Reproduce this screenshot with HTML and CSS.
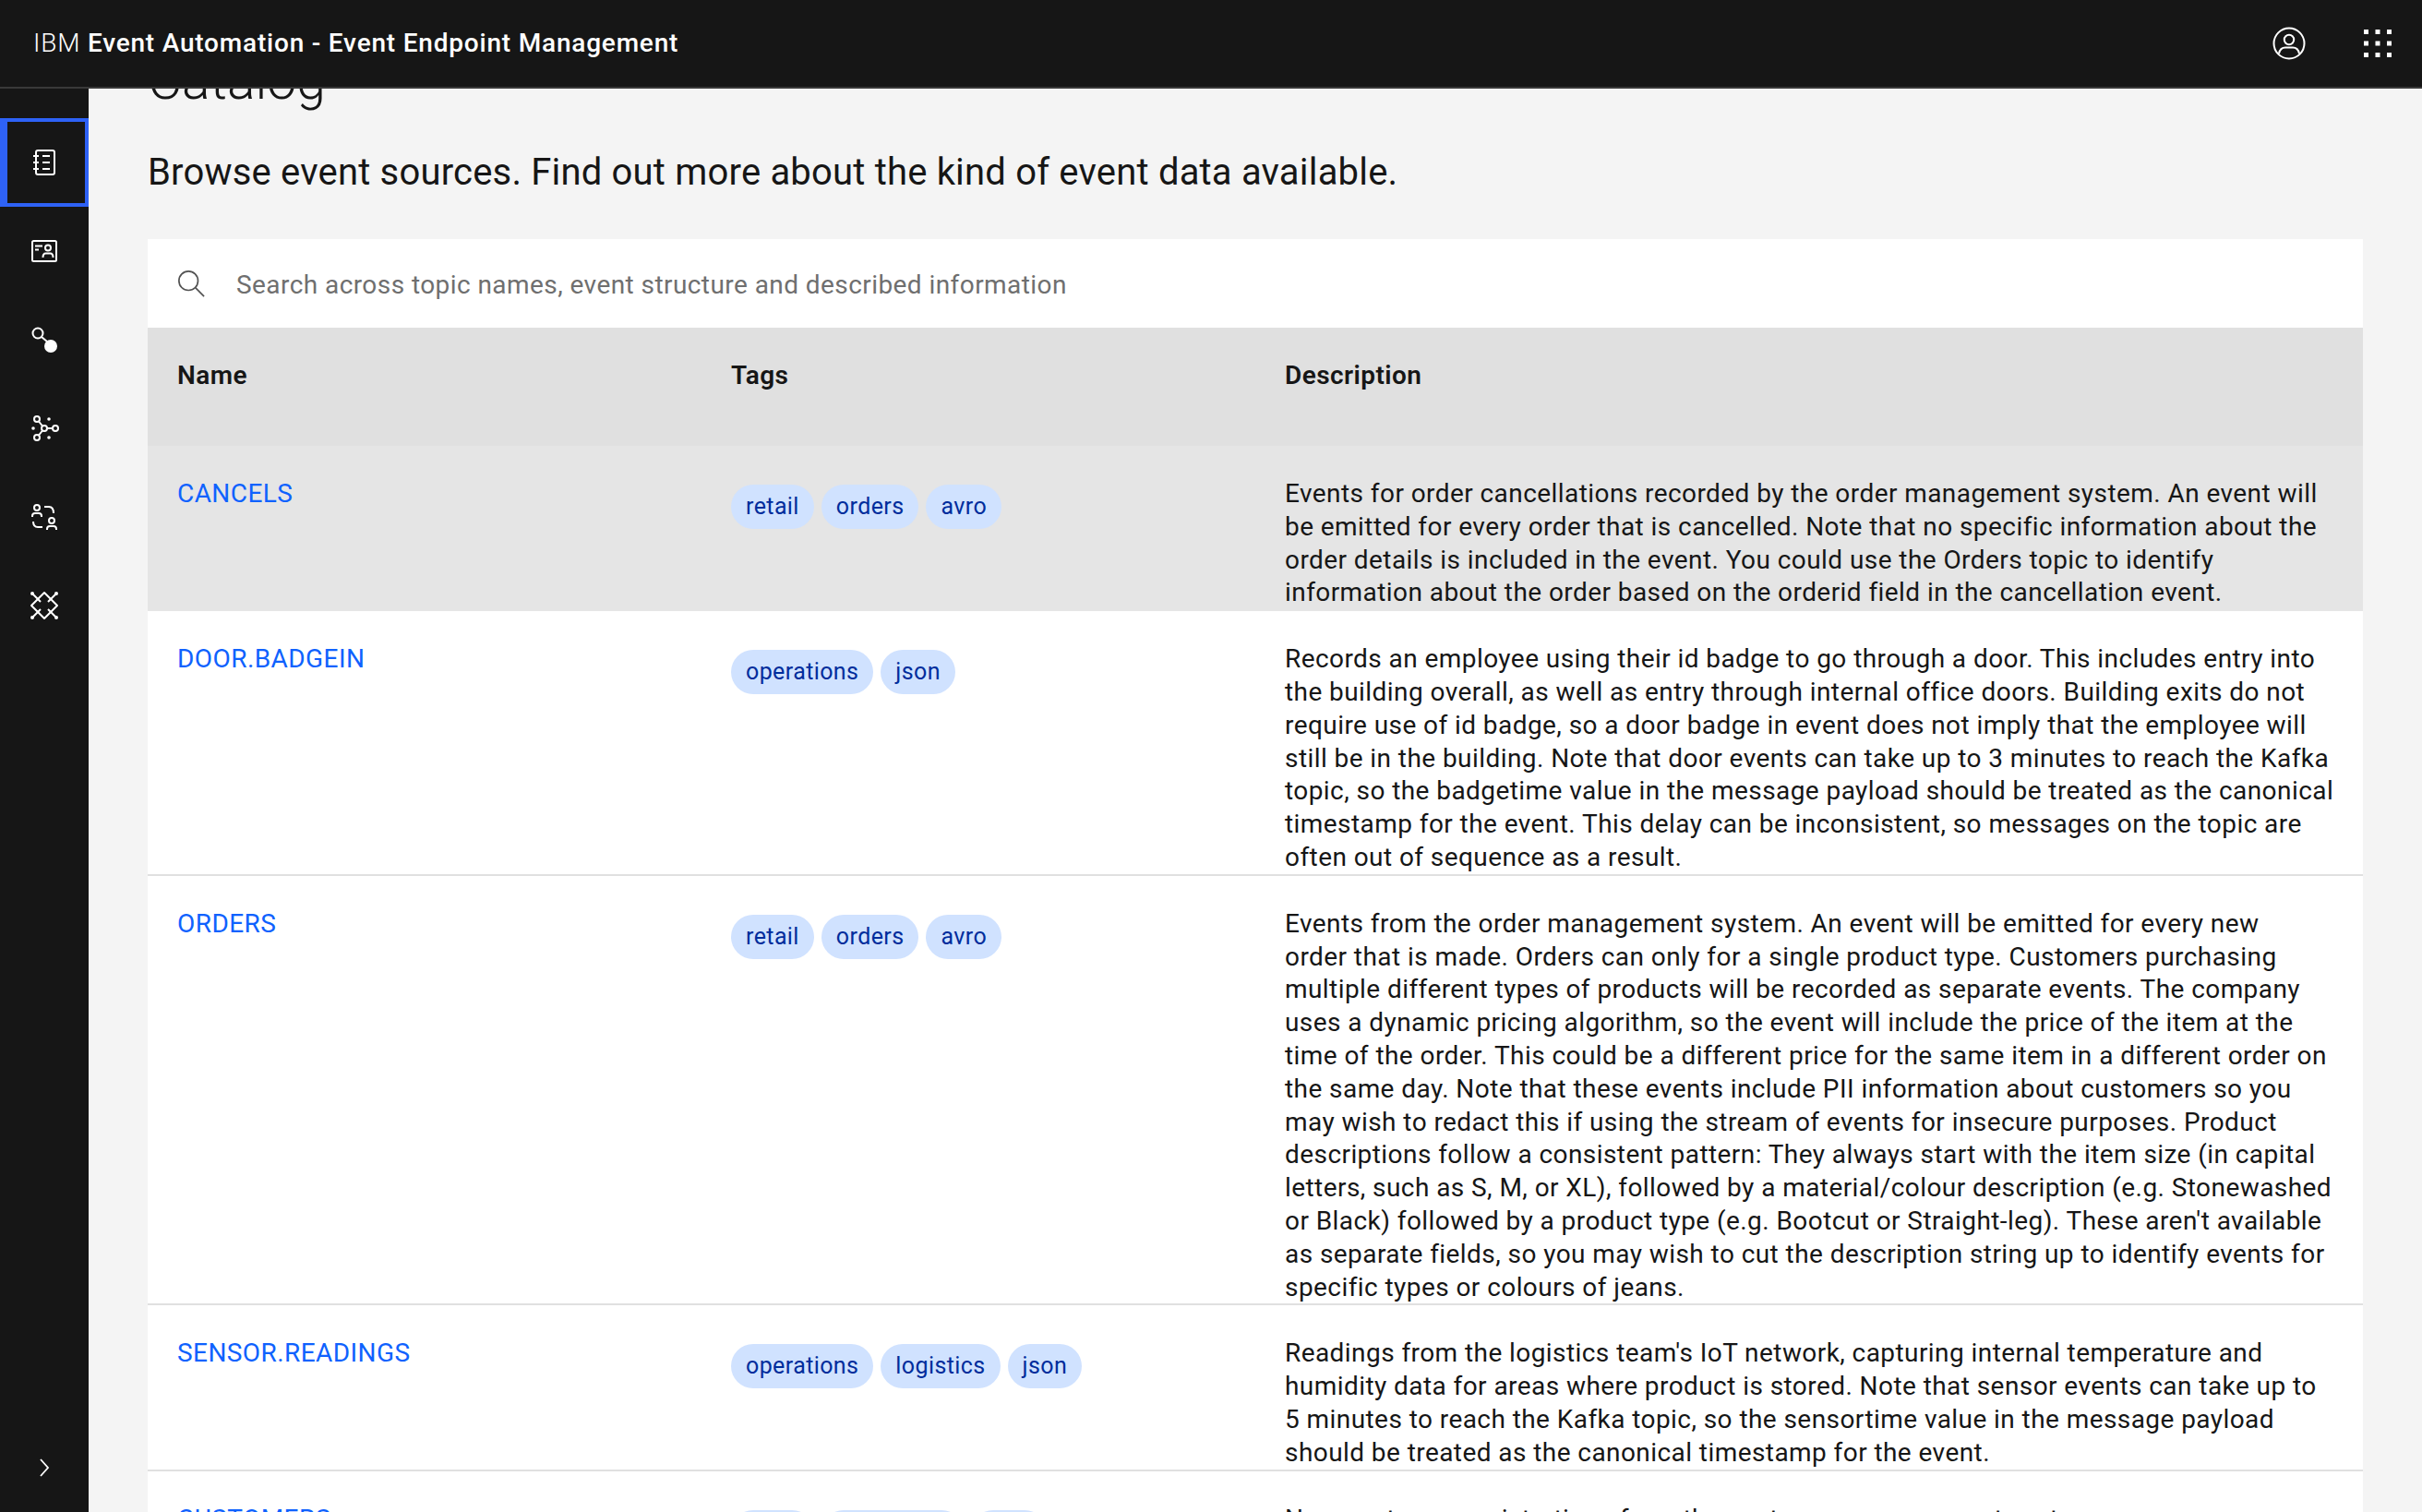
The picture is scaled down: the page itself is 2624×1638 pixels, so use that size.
FILE: index.html
```html
<!DOCTYPE html>
<html lang="en">
<head>
    <meta name="viewport" content="width=device-width, initial-scale=1.0">
    <meta charset="UTF-8">
    <title>Catalog - IBM Event Automation</title>
    <link rel="stylesheet" href="styles.css">
</head>
<body>
    <header class="top-bar">
        <div class="product-name">IBM <strong>Event Automation - Event Endpoint Management</strong></div>
        <div class="top-actions">
            <svg class="top-icon" viewBox="0 0 36 36" fill="none" stroke="#fff" stroke-width="2">
                <circle cx="18" cy="18" r="16.500"/>
                <circle cx="18" cy="14" r="5.200"/>
                <path d="M7 29c1-5 4-6.500 7-6.500h8c3 0 6 1.500 7 6.500"/>
            </svg>
            <svg class="grid-icon" viewBox="0 0 32 32" fill="#fff">
                <rect x="1" y="1" width="5" height="5"/><rect x="13.500" y="1" width="5" height="5"/><rect x="26" y="1" width="5" height="5"/>
                <rect x="1" y="13.500" width="5" height="5"/><rect x="13.500" y="13.500" width="5" height="5"/><rect x="26" y="13.500" width="5" height="5"/>
                <rect x="1" y="26" width="5" height="5"/><rect x="13.500" y="26" width="5" height="5"/><rect x="26" y="26" width="5" height="5"/>
            </svg>
        </div>
    </header>
    <div class="layout">
        <nav class="side-nav">
            <a class="nav-item active">
                <svg class="nav-icon" viewBox="0 0 32 32" fill="none" stroke="#fff" stroke-width="2">
                    <rect x="7" y="3" width="20" height="26" rx="2"/>
                    <path d="M4 9h6M4 16h6M4 23h6M14 9h8M14 16h8M14 23h8"/>
                </svg>
            </a>
            <a class="nav-item">
                <svg class="nav-icon" viewBox="0 0 32 32" fill="none" stroke="#fff" stroke-width="2">
                    <rect x="3" y="5" width="26" height="22" rx="1.500"/>
                    <path d="M6 10.500h8M6 14.500h4"/>
                    <circle cx="20" cy="12.500" r="3"/>
                    <path d="M14.500 23c0-3 1-4.500 3-4.500h5c2 0 3 1.500 3 4.500"/>
                </svg>
            </a>
            <a class="nav-item">
                <svg class="nav-icon" viewBox="0 0 32 32" fill="none" stroke="#fff" stroke-width="2">
                    <circle cx="9" cy="9" r="5.500"/>
                    <path d="M13 13l6 5"/>
                    <circle cx="23" cy="23" r="6" fill="#fff"/>
                </svg>
            </a>
            <a class="nav-item">
                <svg class="nav-icon" viewBox="0 0 32 32" fill="none" stroke="#fff" stroke-width="2">
                    <circle cx="16" cy="16" r="3"/>
                    <circle cx="8" cy="6" r="3"/>
                    <circle cx="8" cy="26" r="3"/>
                    <circle cx="28" cy="16" r="3"/>
                    <path d="M10 8.500l4 5M10 23.500l4-5M19 16h6"/>
                    <g fill="#fff" stroke="none">
                        <circle cx="21" cy="6" r="1.800"/><circle cx="21" cy="26" r="1.800"/><circle cx="4" cy="16" r="1.800"/>
                    </g>
                </svg>
            </a>
            <a class="nav-item">
                <svg class="nav-icon" viewBox="0 0 32 32" fill="none" stroke="#fff" stroke-width="2">
                    <circle cx="8" cy="6" r="3"/>
                    <path d="M3 16v-1c0-2 1-3 3-3h4c2 0 3 1 3 3v1"/>
                    <circle cx="24" cy="20" r="3"/>
                    <path d="M19 30v-1c0-2 1-3 3-3h4c2 0 3 1 3 3v1"/>
                    <path d="M16 5h5c3 0 5 2 5 7M14 27h-5c-3 0-5-2-5-6"/>
                </svg>
            </a>
            <a class="nav-item">
                <svg class="nav-icon" viewBox="0 0 32 32" fill="none" stroke="#fff" stroke-width="2" stroke-linejoin="round">
                    <path d="M16 2l14 14-14 14L2 16z"/>
                    <path d="M3 3l9 9M29 3l-9 9M3 29l9-9M29 29l-9-9"/>
                    <g fill="#fff" stroke="none">
                        <circle cx="3" cy="3" r="2"/><circle cx="29" cy="3" r="2"/><circle cx="3" cy="29" r="2"/><circle cx="29" cy="29" r="2"/>
                    </g>
                </svg>
            </a>
            <a class="nav-item nav-toggle">
                <svg class="chevron" viewBox="0 0 12 20" fill="none" stroke="#fff" stroke-width="1.800">
                    <path d="M2 1l8 9-8 9"/>
                </svg>
            </a>
        </nav>
        <main class="content">
            <div class="scrolled">
                <h1>Catalog</h1>
                <p class="intro">Browse event sources. Find out more about the kind of event data available.</p>

                <div class="search-row">
                    <svg class="search-icon" viewBox="0 0 32 32" fill="none" stroke="#525252" stroke-width="1.800">
                        <circle cx="13" cy="13" r="11"/>
                        <path d="M21 21l10 10"/>
                    </svg>
                    <span class="search-text">Search across topic names, event structure and described information</span>
                </div>

                <table class="catalog">
                    <colgroup>
                        <col class="col-name">
                        <col class="col-tags">
                        <col>
                    </colgroup>
                    <thead>
                        <tr>
                            <th>Name</th>
                            <th>Tags</th>
                            <th>Description</th>
                        </tr>
                    </thead>
                    <tbody>
                        <tr class="hovered">
                            <td><a class="topic">CANCELS</a></td>
                            <td>
                                <div class="tags"><span class="tag">retail</span><span class="tag">orders</span><span class="tag">avro</span></div>
                            </td>
                            <td class="desc">Events for order cancellations recorded by the order management system. An event will<br>be emitted for every order that is cancelled. Note that no specific information about the<br>order details is included in the event. You could use the Orders topic to identify<br>information about the order based on the orderid field in the cancellation event.</td>
                        </tr>
                        <tr>
                            <td><a class="topic">DOOR.BADGEIN</a></td>
                            <td>
                                <div class="tags"><span class="tag">operations</span><span class="tag">json</span></div>
                            </td>
                            <td class="desc">Records an employee using their id badge to go through a door. This includes entry into<br>the building overall, as well as entry through internal office doors. Building exits do not<br>require use of id badge, so a door badge in event does not imply that the employee will<br>still be in the building. Note that door events can take up to 3 minutes to reach the Kafka<br>topic, so the badgetime value in the message payload should be treated as the canonical<br>timestamp for the event. This delay can be inconsistent, so messages on the topic are<br>often out of sequence as a result.</td>
                        </tr>
                        <tr>
                            <td><a class="topic">ORDERS</a></td>
                            <td>
                                <div class="tags"><span class="tag">retail</span><span class="tag">orders</span><span class="tag">avro</span></div>
                            </td>
                            <td class="desc">Events from the order management system. An event will be emitted for every new<br>order that is made. Orders can only for a single product type. Customers purchasing<br>multiple different types of products will be recorded as separate events. The company<br>uses a dynamic pricing algorithm, so the event will include the price of the item at the<br>time of the order. This could be a different price for the same item in a different order on<br>the same day. Note that these events include PII information about customers so you<br>may wish to redact this if using the stream of events for insecure purposes. Product<br>descriptions follow a consistent pattern: They always start with the item size (in capital<br>letters, such as S, M, or XL), followed by a material/colour description (e.g. Stonewashed<br>or Black) followed by a product type (e.g. Bootcut or Straight-leg). These aren't available<br>as separate fields, so you may wish to cut the description string up to identify events for<br>specific types or colours of jeans.</td>
                        </tr>
                        <tr>
                            <td><a class="topic">SENSOR.READINGS</a></td>
                            <td>
                                <div class="tags"><span class="tag">operations</span><span class="tag">logistics</span><span class="tag">json</span></div>
                            </td>
                            <td class="desc">Readings from the logistics team's IoT network, capturing internal temperature and<br>humidity data for areas where product is stored. Note that sensor events can take up to<br>5 minutes to reach the Kafka topic, so the sensortime value in the message payload<br>should be treated as the canonical timestamp for the event.</td>
                        </tr>
                        <tr>
                            <td><a class="topic">CUSTOMERS</a></td>
                            <td>
                                <div class="tags"><span class="tag">retail</span><span class="tag">customers</span><span class="tag">avro</span></div>
                            </td>
                            <td class="desc">New customer registrations from the customer management system.</td>
                        </tr>
                    </tbody>
                </table>
            </div>
        </main>
    </div>
</body>
</html>
```

FILE: styles.css
```css
* {
    box-sizing: border-box;
}
html, body {
    height: 100%;
}
body {
    margin: 0;
    display: flex;
    flex-direction: column;
    overflow: hidden;
    font-family: Roboto, "Noto Sans", sans-serif;
    font-size: 28px;
    line-height: 35.8px;
    letter-spacing: 0.43px;
    color: #161616;
    background: #f4f4f4;
}
.top-bar {
    flex: none;
    height: 96px;
    display: flex;
    align-items: center;
    justify-content: space-between;
    padding: 0 32px 0 36px;
    background: #161616;
    border-bottom: 2px solid #393939;
    color: #fff;
}
.product-name {
    font-size: 28px;
    font-weight: 300;
    letter-spacing: 0.8px;
}
.product-name strong {
    font-weight: 500;
}
.top-actions {
    display: flex;
    align-items: center;
    gap: 62px;
}
.top-icon {
    width: 36px;
    height: 36px;
    display: block;
}
.grid-icon {
    width: 32px;
    height: 32px;
    display: block;
}
.layout {
    flex: 1;
    min-height: 0;
    display: flex;
}
.side-nav {
    flex: none;
    width: 96px;
    background: #161616;
    padding-top: 32px;
    display: flex;
    flex-direction: column;
}
.nav-item {
    height: 96px;
    display: flex;
    align-items: center;
    justify-content: center;
}
.nav-item.active {
    border: 4px solid #2e62f6;
    border-left-width: 8px;
    padding-right: 4px;
}
.nav-toggle {
    margin-top: auto;
}
.nav-icon {
    width: 32px;
    height: 32px;
}
.chevron {
    width: 12px;
    height: 20px;
}
.content {
    flex: 1;
    min-width: 0;
    overflow: hidden;
}
.scrolled {
    margin-top: -44px;
    padding: 0 64px;
}
h1 {
    margin: 0;
    font-size: 57px;
    font-weight: 300;
    line-height: 72px;
    letter-spacing: 0;
}
.intro {
    margin: 35px 0 44px;
    font-size: 40px;
    line-height: 56px;
    font-weight: 400;
    letter-spacing: 0.19px;
}
.search-row {
    height: 96px;
    display: flex;
    align-items: center;
    gap: 34px;
    padding-left: 32px;
    background: #fff;
}
.search-icon {
    width: 30px;
    height: 30px;
    flex: none;
}
.search-text {
    padding-top: 3px;
    color: #6f6f6f;
}
.catalog {
    width: 100%;
    border-collapse: collapse;
    table-layout: fixed;
    background: #fff;
}
.col-name, .col-tags {
    width: 600px;
}
th {
    height: 128px;
    padding: 34px 32px 0;
    text-align: left;
    vertical-align: top;
    background: #e0e0e0;
    font-weight: 600;
}
td {
    padding: 34px 32px 0;
    vertical-align: top;
    border-bottom: 2px solid #e0e0e0;
}
.hovered td {
    background: #e5e5e5;
    border-bottom-color: #e5e5e5;
}
.desc {
    white-space: nowrap;
}
.topic {
    color: #0f62fe;
}
.tags {
    display: flex;
    gap: 8px;
    padding-top: 8px;
}
.tag {
    height: 48px;
    padding: 0 16px;
    display: flex;
    align-items: center;
    border-radius: 24px;
    background: #d0e2ff;
    color: #002d9c;
    font-size: 25px;
    letter-spacing: 0.4px;
}
```
